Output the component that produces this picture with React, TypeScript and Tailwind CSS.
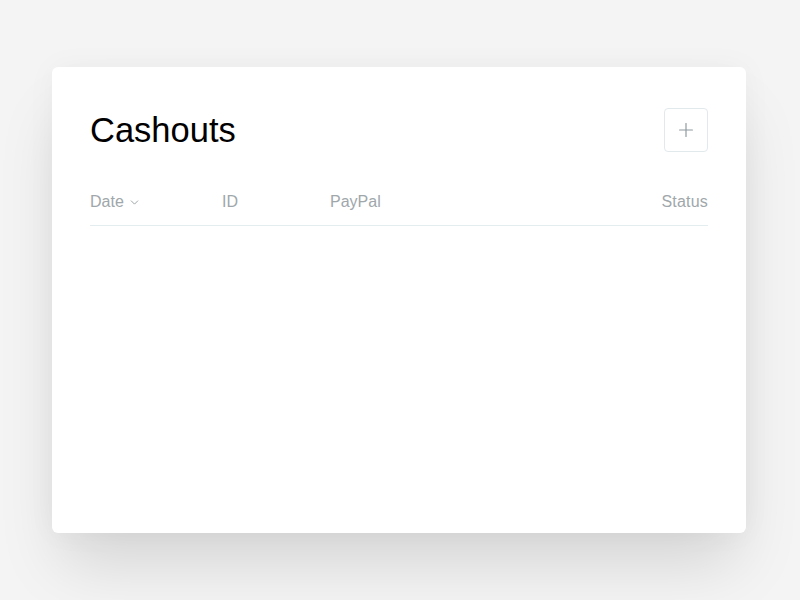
import { ChevronDown, Plus } from 'lucide-react';

// Cashouts panel: title, add button and an empty table header
export default function App() {
  return (
    <div
      className="min-h-screen w-full bg-[#f4f4f4] pt-[67px] pl-[52px]"
      style={{ fontFamily: '"Liberation Sans", Arial, sans-serif' }}
    >
      <div className="w-[694px] h-[466px] bg-white rounded-[6px] shadow-[0_40px_60px_-10px_rgba(0,0,0,0.13),0_0_30px_rgba(0,0,0,0.04)] px-[38px] pt-[41px]">
        <div className="flex items-center justify-between h-[44px]">
          <h1 className="text-[34.5px] font-normal text-black leading-none">Cashouts</h1>
          <button className="w-[44px] h-[44px] flex items-center justify-center rounded-[4px] border border-[#e2e9ec] text-[#8f9a9f]">
            <Plus className="w-[22px] h-[22px]" strokeWidth={1.3} />
          </button>
        </div>

        <div className="mt-[41px] flex items-center leading-[18px] pb-[14px] text-[16px] text-[#a0a7ab] border-b border-[#e3ecef]">
          <div className="w-[132px] flex items-center gap-[4px]">
            Date
            <ChevronDown className="w-[13px] h-[13px] mt-[1px] text-[#959da1]" strokeWidth={1.7} />
          </div>
          <div className="w-[108px]">ID</div>
          <div className="flex-1">PayPal</div>
          <div className="tracking-[0.2px]">Status</div>
        </div>
      </div>
    </div>
  );
}
